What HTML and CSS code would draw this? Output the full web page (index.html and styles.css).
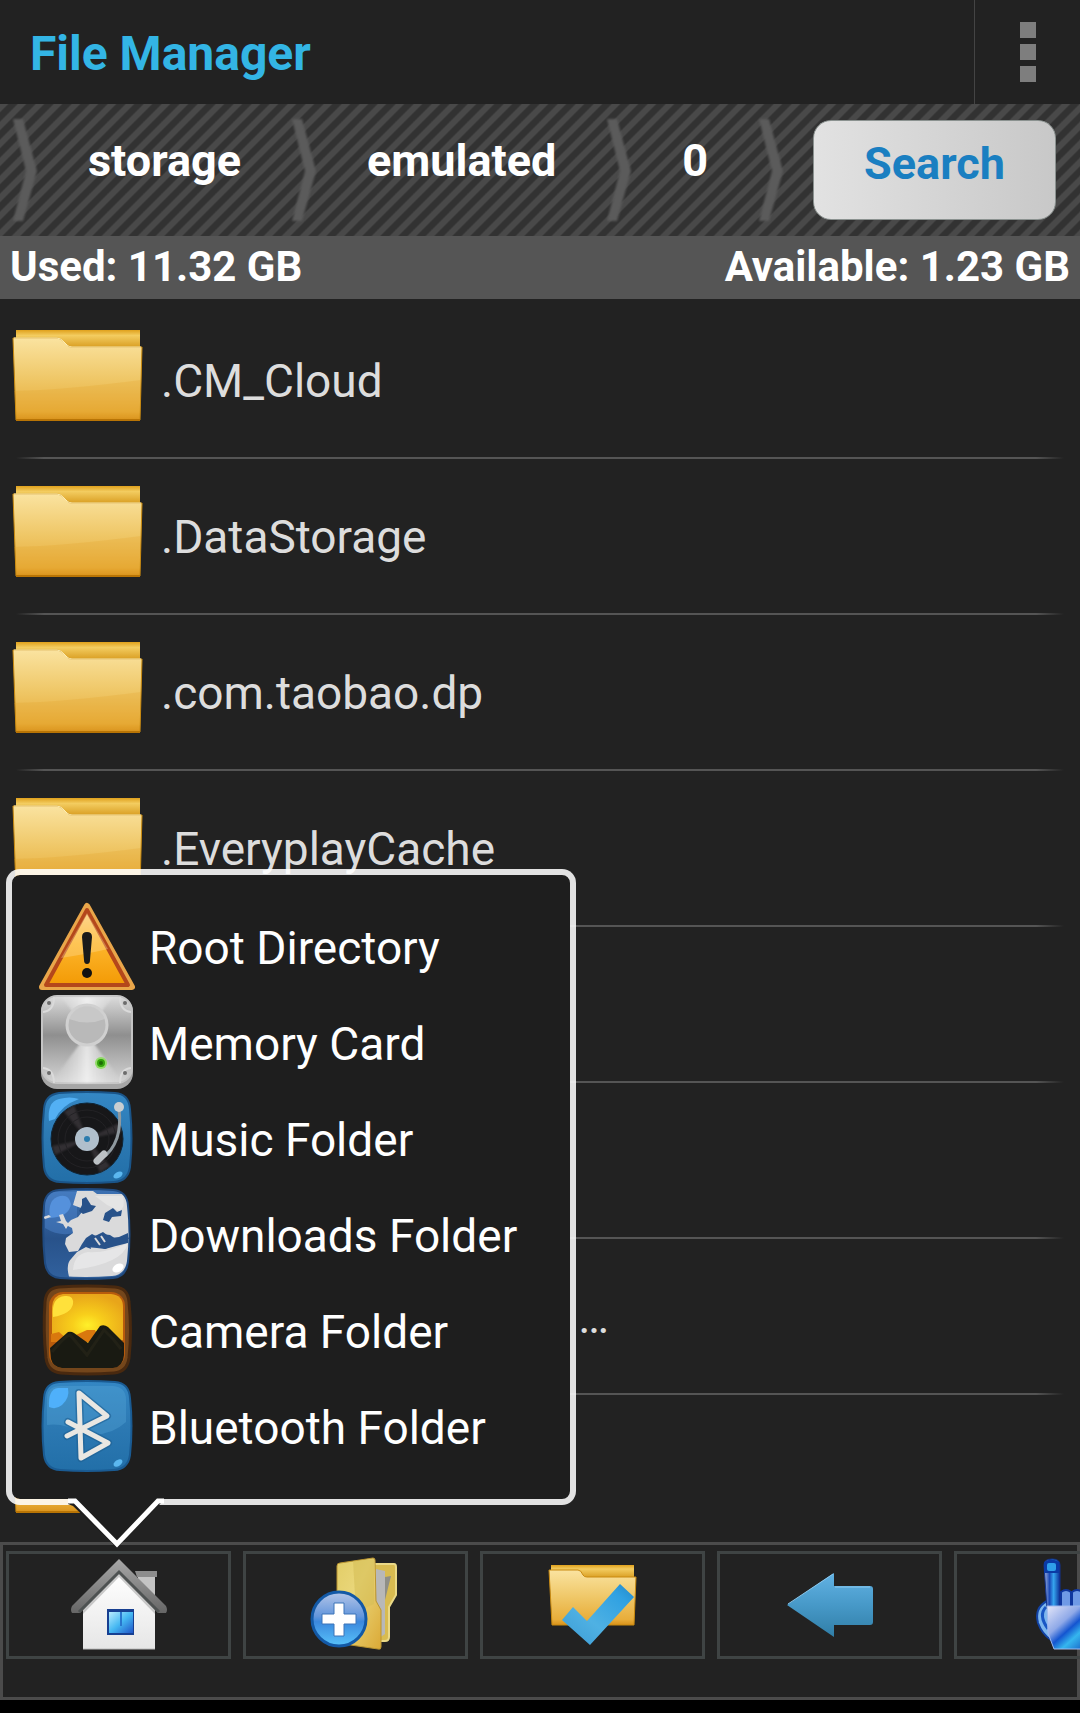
FILE: index.html
```html
<!DOCTYPE html>
<html lang="en">
<head>
<meta charset="utf-8">
<meta name="viewport" content="width=device-width, initial-scale=1">
<title>File Manager</title>
<link rel="stylesheet" href="styles.css">
</head>
<body>
<svg class="defs" aria-hidden="true">
  <defs>
    <linearGradient id="folder-front" x1="0" y1="0" x2="0" y2="1">
      <stop offset="0" stop-color="#fae3a0"/><stop offset=".5" stop-color="#efc767"/><stop offset=".9" stop-color="#e8ad3a"/><stop offset="1" stop-color="#d9921a"/>
    </linearGradient>
    <linearGradient id="folder-back" x1="0" y1="0" x2="0" y2="1">
      <stop offset="0" stop-color="#e0a11c"/><stop offset=".25" stop-color="#f3cc60"/><stop offset="1" stop-color="#cf8c0a"/>
    </linearGradient>
    <linearGradient id="blue-tile" x1="0" y1="0" x2="0" y2="1">
      <stop offset="0" stop-color="#3487c4"/><stop offset=".5" stop-color="#2c79b3"/><stop offset="1" stop-color="#226fa8"/>
    </linearGradient>
    <filter id="soft" x="-20%" y="-20%" width="140%" height="140%"><feGaussianBlur stdDeviation="1"/></filter>
    <symbol id="folder" viewBox="0 0 132 96">
      <path d="M6 94h120" stroke="#151515" stroke-width="3" filter="url(#soft)"/>
      <path d="M4 2h124v22H4z" fill="url(#folder-back)"/>
      <path d="M1 10h44q4 0 7 4l3 3q2 2 5 2h70l-2 73H4z" fill="url(#folder-front)" stroke="#c98a10" stroke-width="1"/>
      <path d="M2 63q50-1 127-11l-2 36H4z" fill="#e19b1c" opacity=".2"/>
      <path d="M2 10h43q4 0 7 4l3 3q2 2 5 2h69" fill="none" stroke="#fdeeb5" stroke-width="1"/>
      <path d="M4 92h124" stroke="#b87405" stroke-width="2"/>
    </symbol>
  </defs>
</svg>

<div class="app">
  <header class="header">
    <h1 class="title">File Manager</h1>
    <button class="overflow" type="button" aria-label="More options"><i></i><i></i><i></i></button>
  </header>

  <nav class="path" aria-label="Path">
    <svg class="chevron" viewBox="0 0 24 104"><path d="M0 1h10l14 52-14 50H0l13-50z"/></svg>
    <a class="crumb" href="#">storage</a>
    <svg class="chevron" viewBox="0 0 24 104"><path d="M0 1h10l14 52-14 50H0l13-50z"/></svg>
    <a class="crumb" href="#">emulated</a>
    <svg class="chevron" viewBox="0 0 24 104"><path d="M0 1h10l14 52-14 50H0l13-50z"/></svg>
    <a class="crumb" href="#">0</a>
    <svg class="chevron" viewBox="0 0 24 104"><path d="M0 1h10l14 52-14 50H0l13-50z"/></svg>
    <button class="search" type="button">Search</button>
  </nav>

  <div class="usage"><span>Used: 11.32 GB</span><span>Available: 1.23 GB</span></div>

  <ul class="files">
    <li class="file"><svg class="file-icon"><use href="#folder"/></svg><span class="file-name">.CM_Cloud</span></li>
    <li class="file"><svg class="file-icon"><use href="#folder"/></svg><span class="file-name">.DataStorage</span></li>
    <li class="file"><svg class="file-icon"><use href="#folder"/></svg><span class="file-name">.com.taobao.dp</span></li>
    <li class="file"><svg class="file-icon"><use href="#folder"/></svg><span class="file-name">.EveryplayCache</span></li>
    <li class="file"><svg class="file-icon"><use href="#folder"/></svg></li>
    <li class="file"><svg class="file-icon"><use href="#folder"/></svg></li>
    <li class="file"><svg class="file-icon"><use href="#folder"/></svg><span class="file-name file-name-long">…</span></li>
    <li class="file"><svg class="file-icon"><use href="#folder"/></svg></li>
  </ul>

  <footer class="toolbar">
    <div class="popup">
      <button class="place" type="button">
        <svg class="icon" viewBox="0 0 96 96">
          <defs><linearGradient id="warn" x1="0" y1="0" x2="0" y2="1"><stop offset="0" stop-color="#fbd28a"/><stop offset=".45" stop-color="#fdb62c"/><stop offset="1" stop-color="#f39a05"/></linearGradient></defs>
          <path d="M48 8 93 89H3z" fill="#e9a64a" stroke="#e9a64a" stroke-width="6" stroke-linejoin="round"/>
          <path d="M48 12 89 87H7z" fill="url(#warn)" stroke="#b4471b" stroke-width="4" stroke-linejoin="round"/>
          <path d="M48 15 69 51Q48 56 22 60z" fill="#ffe0a0" opacity=".35"/>
          <path d="M48 34q5 0 5 5l-2 23q0 4-3 4t-3-4l-2-23q0-5 5-5z" fill="#1a1a1a"/>
          <circle cx="48" cy="75" r="5" fill="#111"/>
        </svg><span class="place-name">Root Directory</span></button>
      <button class="place" type="button">
        <svg class="icon" viewBox="0 0 96 96">
          <defs>
            <linearGradient id="metal" x1="0" y1="0" x2="0" y2="1"><stop offset="0" stop-color="#dcdcdc"/><stop offset=".45" stop-color="#8f8f8f"/><stop offset="1" stop-color="#d5d5d5"/></linearGradient>
            <linearGradient id="cone" x1="0" y1="0" x2="1" y2="0"><stop offset="0" stop-color="#ddd" stop-opacity="0"/><stop offset=".5" stop-color="#f6f6f6"/><stop offset="1" stop-color="#ddd" stop-opacity="0"/></linearGradient>
          </defs>
          <rect x="2" y="2" width="92" height="93" rx="16" fill="#a6a6a6"/>
          <rect x="3" y="2" width="90" height="87" rx="15" fill="url(#metal)" stroke="#c4c4c4" stroke-width="2"/>
          <path d="M48 40 84 89H12zM48 36 74 3H22z" fill="url(#cone)" opacity=".8" filter="url(#soft)"/>
          <circle cx="48" cy="31" r="20" fill="#b9b9b9" stroke="#d0d0d0" stroke-width="3"/>
          <path d="M30 25a19 19 0 0 1 36 0q-18 7-36 0z" fill="#cfcfcf" opacity=".7"/>
          <path d="M4 18q11-1 11-15M92 18Q81 17 81 3M4 74q11 1 11 15M92 74q-11 1-11 15" fill="none" stroke="#dadada" stroke-width="2"/>
          <g fill="#6c6c6c"><circle cx="10" cy="9" r="2"/><circle cx="86" cy="9" r="2"/><circle cx="10" cy="79" r="2"/><circle cx="86" cy="79" r="2"/></g>
          <circle cx="62" cy="69" r="6" fill="#92dc69"/><circle cx="62" cy="69" r="3" fill="#1d6d05" stroke="#34a50d" stroke-width="2"/>
        </svg><span class="place-name">Memory Card</span></button>
      <button class="place" type="button">
        <svg class="icon" viewBox="0 0 96 96">
          <path d="M20 3q28-2 56 0 14 1 15 16 3 30 0 58-2 14-16 15-27 2-54 0Q7 91 5 77 2 48 5 19 6 5 20 3z" fill="url(#blue-tile)" stroke="#1a5488" stroke-width="2"/>
          <path d="M10 31Q8 12 20 9q11-3 20 0Q23 15 16 29z" fill="#53b0f4"/>
          <circle cx="48" cy="49" r="36" fill="#171719" stroke="#0f2434" stroke-width="1"/>
          <path d="M48 49 25 22l10-7zM48 49l23 27-10 7zM48 49 16 65l-3-9zM48 49l32-16 3 9z" fill="#454045" opacity=".6" filter="url(#soft)"/>
          <g fill="none" stroke="#232225"><circle cx="48" cy="49" r="29"/><circle cx="48" cy="49" r="22"/></g>
          <circle cx="48" cy="49" r="12" fill="#b0bfcc"/><circle cx="48" cy="49" r="3" fill="#2b7cae"/>
          <path d="M80 18q2 18-2 30-5 14-15 20" fill="none" stroke="#8f999f" stroke-width="3"/>
          <circle cx="80" cy="17" r="5" fill="#c9ced1"/><path d="m58 71 7-7" stroke="#bcc1c5" stroke-width="7" stroke-linecap="round"/>
          <ellipse cx="79" cy="85" rx="5" ry="3" fill="#5bb7ef" transform="rotate(-30 79 85)"/>
        </svg><span class="place-name">Music Folder</span></button>
      <button class="place" type="button">
        <svg class="icon" viewBox="0 0 96 96">
          <defs><linearGradient id="sea" x1="0" y1="0" x2="0" y2="1"><stop offset="0" stop-color="#3d72b4"/><stop offset=".55" stop-color="#28528a"/><stop offset="1" stop-color="#31619e"/></linearGradient>
          <clipPath id="globe-clip"><path d="M20 5q28-2 54 0 13 1 14 15 3 28 0 55-2 14-15 15-27 2-51 0Q9 90 7 76 3 48 6 20 7 6 20 5z"/></clipPath></defs>
          <path d="M20 4q28-2 54 0 14 1 15 16 3 28 0 56-2 15-15 16-27 2-53 0Q8 91 6 77 3 48 5 20 6 5 20 4z" fill="url(#sea)" stroke="#1f4a80" stroke-width="2"/>
          <g clip-path="url(#globe-clip)">
            <path d="M6 42V6h32v40q-16 6-32-4z" fill="#5087d0" opacity=".45"/>
            <path d="M11 32Q8 13 21 10q9-2 11 8-2 13-21 14z" fill="#5591dc"/>
            <g fill="#dadadb">
              <path d="M38 5h16l4 3h34v44l-8-1-7 2-6-4-8-1-4 3-6-3-6 4-4 6-4 7-9 1-4-8 1-6 7-5-1-5-6-3 5-5 7-3 4-5-1-4-8-3z"/>
              <path d="M31 94q-5-15 1-21l6-7 9-5 11 1 8 1 12-5 13-6v42z"/>
              <path d="m4 31 6-2 2 2-6 2zM17 36l5-1-2-6 4-1 3 7 3 3-3 5-3-5z"/>
            </g>
            <g fill="#28528a">
              <path d="m43 13 4-2 5 8 5 1-4 5-9 3-4-3 3-6zM66 27l8-5 4 4 5-2-1 6-9 1-3 5-6-2zM58 49l6-3 8 6 8-1 9-4v10l-12 3-11 3-8-3-8 0-2-5 5-4zM47 55l4 3 1 5-5-2z"/>
            </g>
            <path d="m56 52 5 7M62 50l4 6" stroke="#dadadb" stroke-width="2"/>
            <path d="M34 84q1-16 15-18 16 2 40-9-5 21-55 27z" fill="#efefef" opacity=".6"/>
            <path d="M56 10h28q3 12-4 15l-12-6z" fill="#efefef" opacity=".5"/>
            <ellipse cx="79" cy="82" rx="6" ry="4" fill="#fff" transform="rotate(-30 79 82)"/>
          </g>
        </svg><span class="place-name">Downloads Folder</span></button>
      <button class="place" type="button">
        <svg class="icon" viewBox="0 0 96 96">
          <defs><radialGradient id="sun" cx=".5" cy=".6" r=".6"><stop offset="0" stop-color="#fff02a"/><stop offset=".35" stop-color="#f8cf1b"/><stop offset="1" stop-color="#e8a51a"/></radialGradient></defs>
          <path d="M20 5q28-2 56 0 13 1 14 15 3 28 0 56-2 14-15 15-27 2-53 0Q9 90 7 76 4 48 6 20 7 6 20 5z" fill="#74461b" stroke="#49290f" stroke-width="3"/>
          <rect x="10" y="10" width="76" height="76" rx="14" fill="#b75b0c"/>
          <path d="M24 12h48q12 1 12 13v33q-36 12-71-1V25q1-12 11-13z" fill="url(#sun)"/>
          <path d="M14 35q-2-20 12-21 9-1 8 8-2 10-20 13z" fill="#ffe13b"/>
          <path d="m12 52 8-2 8 7 20-9 8 0 6 12H12z" fill="#d9780e"/>
          <path d="M11 66 29 50q3-1 6 1l14 10 12-17q4-2 8 1l16 16v12q-1 12-11 13H23q-9-1-11-9z" fill="#191a12"/>
          <path d="M13 70q13-16 18-17l17 20 17-25q9 8 17 19" fill="none" stroke="#302d1d" stroke-width="3" opacity=".4"/>
        </svg><span class="place-name">Camera Folder</span></button>
      <button class="place" type="button">
        <svg class="icon" viewBox="0 0 96 96">
          <path d="M20 4q28-2 56 0 14 1 15 16 3 28 0 57-2 14-16 15-27 2-54 0Q7 91 5 77 2 48 5 20 6 5 20 4z" fill="url(#blue-tile)" stroke="#1a5b93" stroke-width="2"/>
          <path d="M8 20Q8 8 22 8h52q13 1 13 14v22q-16 15-40 12-24-12-39-9z" fill="#5aa9da" opacity=".35"/>
          <path d="M10 29Q9 11 19 10h10q2 10-6 17-6 5-13 2z" fill="#4fb0fa"/>
          <path d="M29 44 69 65 42 80 40 15l28 23-40 20" fill="none" stroke="#1e5f91" stroke-width="8" stroke-linejoin="round" stroke-linecap="round" opacity=".6"/>
          <path d="M29 44 69 65 42 80 40 15l28 23-40 20" fill="none" stroke="#e9e7e2" stroke-width="5" stroke-linejoin="round" stroke-linecap="round"/>
          <ellipse cx="79" cy="85" rx="5" ry="3" fill="#5bb7ef" transform="rotate(-35 79 85)"/>
        </svg><span class="place-name">Bluetooth Folder</span></button>
      <svg class="popup-arrow" viewBox="0 0 96 54"><path d="M0 0h96v2L90 8 49 50 5 8 0 6z" fill="#1e1e1e"/><path d="M0 3h7l42 43L90 3h6" fill="none" stroke="#fff" stroke-width="5"/></svg>
    </div>

    <button class="tool" type="button" aria-label="Home">
      <svg class="icon" viewBox="0 0 96 96">
        <defs>
          <linearGradient id="wall" x1="0" y1="0" x2="0" y2="1"><stop offset="0" stop-color="#fff"/><stop offset="1" stop-color="#e6e6e6"/></linearGradient>
          <linearGradient id="roof" x1="0" y1="0" x2="0" y2="1"><stop offset="0" stop-color="#a8a8a8"/><stop offset="1" stop-color="#666"/></linearGradient>
          <linearGradient id="pane" x1="0" y1="0" x2="1" y2="1"><stop offset="0" stop-color="#b9ecff"/><stop offset=".5" stop-color="#45b8f2"/><stop offset="1" stop-color="#1f55c8"/></linearGradient>
        </defs>
        <path d="M67 20h17v28L67 34z" fill="#c4c4c4"/><path d="M64 14h22v6H66z" fill="#8d8d8d"/>
        <path d="M48 16 84 50v42H12V50z" fill="url(#wall)"/>
        <path d="M12 92h72" stroke="#bbb" stroke-width="1"/>
        <path d="M12 57 48 20l36 37v-8L48 14 12 49z" fill="#aaa" opacity=".6"/>
        <path d="M48 2 95 49q2 4 0 7h-8L48 16 9 56H1q-2-3 0-7z" fill="url(#roof)"/>
        <path d="M8 55 48 15l40 40" fill="none" stroke="#4e5252" stroke-width="3"/>
        <rect x="36" y="52" width="27" height="26" fill="#173f91"/><rect x="38" y="55" width="24" height="21" fill="url(#pane)"/><path d="M50 55v14" stroke="#2976ce" stroke-width="2"/>
      </svg>
    </button>
    <button class="tool" type="button" aria-label="New folder">
      <svg class="icon" viewBox="0 0 96 96">
        <defs>
          <linearGradient id="manila" x1="0" y1="0" x2="1" y2="1"><stop offset="0" stop-color="#e2cd67"/><stop offset=".4" stop-color="#ead77b"/><stop offset="1" stop-color="#dba936"/></linearGradient>
          <linearGradient id="ball" x1="0" y1="0" x2="0" y2="1"><stop offset="0" stop-color="#b5c6e8"/><stop offset=".45" stop-color="#6396dc"/><stop offset=".55" stop-color="#3b88dd"/><stop offset="1" stop-color="#58c3fb"/></linearGradient>
        </defs>
        <path d="M66 7h20q2 0 2 3v28l-7 12v30q0 4-4 4h-5z" fill="#d8bb50" stroke="#ead987" stroke-width="2"/>
        <path d="M68 12 77 14v63l-6 4-3-30z" fill="#b8b8b8"/><path d="m77 20 6-1-6 24z" fill="#8f8f86"/>
        <path d="M29 9q0-3 3-3L65 1q2 0 2 2l1 41 5 9v37q0 3-3 2L29 86z" fill="url(#manila)" stroke="#b99431" stroke-width="1"/>
        <path d="M45 4 66 2v45l-18 8z" fill="#d5be57" opacity=".6"/>
        <circle cx="31" cy="62" r="27" fill="url(#ball)" stroke="#1359a6" stroke-width="3"/>
        <path d="M26 46h10v11h12v10H36v12H26V67H14V57h12z" fill="#fff" stroke="#3c74b8" stroke-width="1"/>
      </svg>
    </button>
    <button class="tool" type="button" aria-label="Select">
      <svg class="icon" viewBox="0 0 96 96">
        <defs><linearGradient id="tick" x1="0" y1="1" x2="1" y2="0"><stop offset="0" stop-color="#3b9ad4"/><stop offset=".4" stop-color="#4fb1e3"/><stop offset=".8" stop-color="#2fa1e2"/><stop offset="1" stop-color="#2487c6"/></linearGradient></defs>
        <path d="M6 8h83v16H6z" fill="url(#folder-back)"/>
        <path d="M4 13h29q3 0 5 5 1 2 4 2h49l-2 48H7z" fill="url(#folder-front)" stroke="#c98a10" stroke-width="1"/>
        <path d="M17 63 28 50l14 14 33-37 14 13-44 48z" fill="url(#tick)"/>
      </svg>
    </button>
    <button class="tool" type="button" aria-label="Back">
      <svg class="icon" viewBox="0 0 96 96">
        <defs><linearGradient id="back" x1="0" y1="0" x2="0" y2="1"><stop offset="0" stop-color="#62b2e4"/><stop offset=".5" stop-color="#4799c8"/><stop offset="1" stop-color="#307ea7"/></linearGradient></defs>
        <path d="M5 48 52 16v13h36q3 0 3 3v33q0 3-3 3H52v12z" fill="url(#back)"/>
        <path d="M6 47 51 17M53 30h35" stroke="#8ccaf0" stroke-width="1"/>
      </svg>
    </button>
    <button class="tool" type="button" aria-label="Touch">
      <svg class="icon" viewBox="0 0 96 96">
        <defs>
          <linearGradient id="palm" x1="0" y1="0" x2="1" y2="1"><stop offset="0" stop-color="#e4e6f8"/><stop offset=".35" stop-color="#8fa9e8"/><stop offset=".5" stop-color="#1455d0"/><stop offset=".65" stop-color="#35b6ee"/><stop offset="1" stop-color="#0b3cb4"/></linearGradient>
          <linearGradient id="finger" x1="0" y1="0" x2="1" y2="0"><stop offset="0" stop-color="#a9b9e0"/><stop offset=".35" stop-color="#1a49b8"/><stop offset=".6" stop-color="#35a5ef"/><stop offset="1" stop-color="#0c2d94"/></linearGradient>
        </defs>
        <path d="M28 44q-13 7-9 22 4 11 13 17l2-14z" fill="#7db6ee" stroke="#1242a5" stroke-width="2"/>
        <path d="M27 50q-8 8 2 22" fill="none" stroke="#1a56c4" stroke-width="3"/>
        <path d="M25 8q0-6 8-6t8 6v44H28z" fill="url(#finger)" stroke="#12338f" stroke-width="1"/>
        <path d="M25 5q8-5 15 0v11H25z" fill="#0a3aa5"/><rect x="28" y="6" width="9" height="8" rx="2" fill="#2f9fea"/>
        <path d="M42 35q5-4 10 0v15H42zM53 35q5-4 10 0v15H53zM64 35q5-4 10 0v15H64z" fill="#6f9ae6" stroke="#0f379f" stroke-width="2"/>
        <path d="M28 49h48v27l-6 16H35l-6-16z" fill="url(#palm)" stroke="#9db8ee" stroke-width="1"/>
      </svg>
    </button>
  </footer>
</div>
</body>
</html>
```
FILE: styles.css
```css
* {
  box-sizing: border-box;
}

body {
  margin: 0;
  background: #000;
  color: #fff;
  font-family: Roboto, "Noto Sans", sans-serif;
}

button {
  margin: 0;
  padding: 0;
  border: 0;
  background: none;
  color: inherit;
  font: inherit;
}

.defs {
  position: absolute;
  width: 0;
  height: 0;
}

.app {
  display: flex;
  flex-direction: column;
  height: 100vh;
  padding-bottom: 13px;
  overflow: hidden;
}

.header {
  display: flex;
  flex: none;
  justify-content: space-between;
  height: 104px;
  background: #222;
}

.title {
  margin: 0;
  padding: 4px 0 0 30px;
  color: #33b5e5;
  font-size: 48px;
  line-height: 100px;
}

.overflow {
  display: flex;
  flex-direction: column;
  align-items: center;
  justify-content: center;
  gap: 6px;
  width: 106px;
  border-left: 1px solid #444;
}

.overflow i {
  width: 16px;
  height: 16px;
  background: #7e7e7e;
}

.path {
  display: flex;
  flex: none;
  align-items: center;
  height: 132px;
  padding: 0 24px 0 13px;
  background: linear-gradient(135deg, #494949 20%, #323232 26% 46%, #494949 52% 70%, #323232 76% 96%, #494949) 0 0 / 18px 18px;
}

.chevron {
  flex: none;
  width: 24px;
  height: 104px;
  fill: #5b5b5b;
  filter: blur(1px);
}

.crumb {
  padding: 0 51px 20px;
  color: #fff;
  font-size: 45px;
  font-weight: 700;
  text-decoration: none;
}

.search {
  width: 243px;
  height: 100px;
  margin-left: auto;
  padding-bottom: 14px;
  border: 1px solid #8b9290;
  border-radius: 18px;
  background: linear-gradient(90deg, #e2e2e2, #c8c8c8);
  color: #1a7fc1;
  font-size: 45px;
  font-weight: 700;
}

.usage {
  display: flex;
  flex: none;
  justify-content: space-between;
  padding: 0 10px 2px;
  background: #555;
  font-size: 42px;
  font-weight: 700;
  line-height: 61px;
}

.files {
  flex: 1;
  min-height: 0;
  margin: 0;
  padding: 4px 0 0;
  overflow: hidden;
  background: #222;
  list-style: none;
}

.file {
  display: flex;
  align-items: flex-start;
  gap: 17px;
  height: 156px;
  padding: 25px 12px 0;
  background: linear-gradient(90deg, transparent 16px, #555 44px calc(100% - 44px), transparent calc(100% - 16px)) 0 100% / 100% 2px no-repeat;
}

.file-icon {
  flex: none;
  width: 132px;
  height: 96px;
}

.file-name {
  color: #ddd;
  font-size: 46px;
  line-height: 106px;
}

.file-name-long {
  width: 448px;
  text-align: right;
}

.toolbar {
  position: relative;
  display: flex;
  flex: none;
  gap: 12px;
  padding: 9px 6px 41px;
  background: #222;
  box-shadow: inset 0 0 0 3px #4b4b4b;
}

.tool {
  display: flex;
  flex: none;
  align-items: center;
  justify-content: center;
  width: 225px;
  height: 108px;
  border: 3px solid #3f4444;
}

.icon {
  flex: none;
  width: 96px;
  height: 96px;
}

.popup {
  position: absolute;
  bottom: calc(100% + 37px);
  left: 6px;
  display: flex;
  flex-direction: column;
  width: 570px;
  padding: 23px 27px 25px;
  border: 6px solid rgba(255, 255, 255, .87);
  border-radius: 14px;
  background: #1e1e1e;
  background-clip: padding-box;
}

.place {
  display: flex;
  align-items: center;
  gap: 14px;
  height: 96px;
  color: #fff;
  font-size: 46px;
  white-space: nowrap;
}

.place-name {
  padding-top: 4px;
}

.popup-arrow {
  position: absolute;
  top: calc(100% - 1px);
  left: 56px;
  width: 96px;
  height: 54px;
}
```
